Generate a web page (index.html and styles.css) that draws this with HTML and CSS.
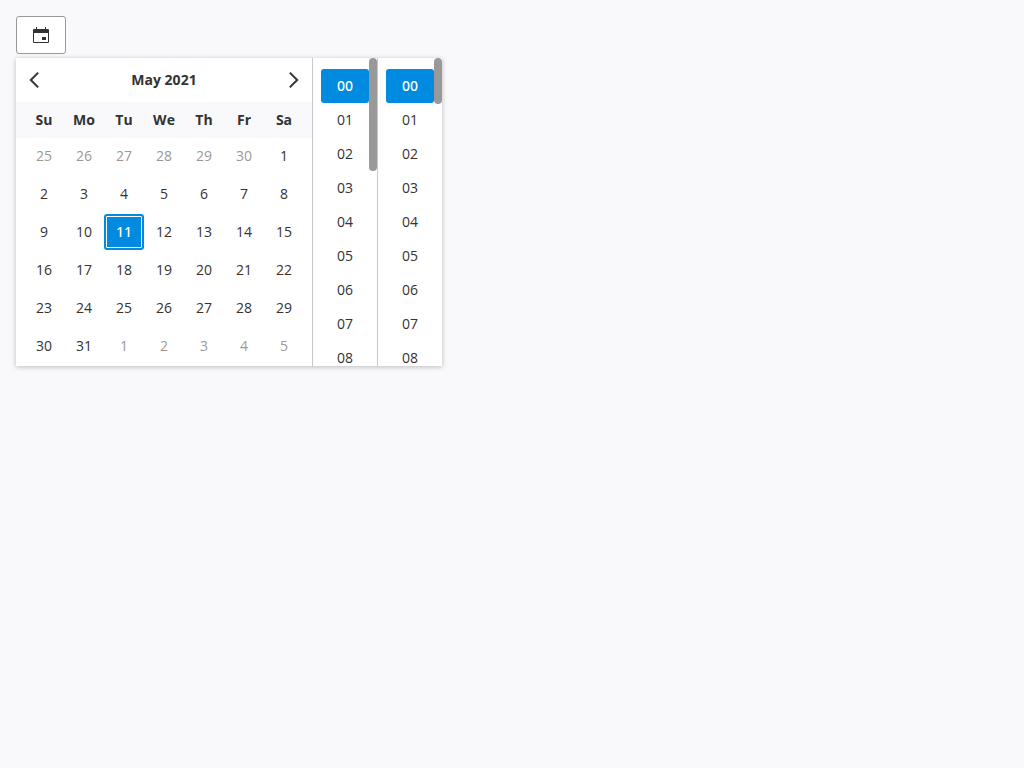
FILE: index.html
```html
<!DOCTYPE html>
<html lang="en">
<head>
<meta charset="utf-8">
<title>Date and time picker</title>
<link rel="stylesheet" href="styles.css">
</head>
<body>
<button class="trigger" aria-label="Open calendar">
<svg width="16" height="16" viewBox="0 0 16 16"><path fill="#333" fill-rule="evenodd" d="M3 0h1v2h8V0h1v2h2a1 1 0 0 1 1 1v12a1 1 0 0 1-1 1H1a1 1 0 0 1-1-1V3a1 1 0 0 1 1-1h2zM1 6v9h14V6zM9 10h4v3H9z"/></svg>
</button>
<div class="panel">
<div class="calendar">
<div class="header">
<svg width="12" height="18" viewBox="0 0 12 18"><path class="chevron" d="M10.2 1.6 2.8 9l7.4 7.4"/></svg>
<span>May 2021</span>
<svg width="12" height="18" viewBox="0 0 12 18"><path class="chevron" d="M1.8 1.6 9.2 9l-7.4 7.4"/></svg>
</div>
<div class="weekdays"><span>Su</span><span>Mo</span><span>Tu</span><span>We</span><span>Th</span><span>Fr</span><span>Sa</span></div>
<div class="days">
<span class="muted">25</span><span class="muted">26</span><span class="muted">27</span><span class="muted">28</span><span class="muted">29</span><span class="muted">30</span><span>1</span>
<span>2</span><span>3</span><span>4</span><span>5</span><span>6</span><span>7</span><span>8</span>
<span>9</span><span>10</span><span class="selected">11</span><span>12</span><span>13</span><span>14</span><span>15</span>
<span>16</span><span>17</span><span>18</span><span>19</span><span>20</span><span>21</span><span>22</span>
<span>23</span><span>24</span><span>25</span><span>26</span><span>27</span><span>28</span><span>29</span>
<span>30</span><span>31</span><span class="muted">1</span><span class="muted">2</span><span class="muted">3</span><span class="muted">4</span><span class="muted">5</span>
</div>
</div>
<div class="time">
<div class="list"><span class="active">00</span><span>01</span><span>02</span><span>03</span><span>04</span><span>05</span><span>06</span><span>07</span><span>08</span></div>
<div class="thumb hours"></div>
</div>
<div class="time">
<div class="list"><span class="active">00</span><span>01</span><span>02</span><span>03</span><span>04</span><span>05</span><span>06</span><span>07</span><span>08</span></div>
<div class="thumb minutes"></div>
</div>
</div>
</body>
</html>
```
FILE: styles.css
```css
* { box-sizing: border-box; }
body {
  margin: 0;
  padding: 16px;
  background: #f9f9fc;
  color: #333;
  font: 14px/20px "Open Sans", sans-serif;
}
.trigger {
  display: flex;
  align-items: center;
  justify-content: center;
  width: 50px;
  height: 38px;
  padding: 0;
  background: #fff;
  border: 1px solid #999;
  border-radius: 3px;
}
.panel {
  display: flex;
  width: 426px;
  height: 308px;
  margin-top: 4px;
  background: #fff;
  box-shadow: 0 1px 5px rgba(0, 0, 0, 0.25);
}
.calendar { width: 296px; }
.header {
  display: flex;
  align-items: center;
  justify-content: space-between;
  height: 44px;
  padding: 0 12px;
  font-weight: 700;
}
.chevron { fill: none; stroke: #333; stroke-width: 2; }
.weekdays, .days {
  display: grid;
  grid-template-columns: repeat(7, 40px);
  padding: 0 8px;
  text-align: center;
}
.weekdays {
  height: 36px;
  background: #f9f9fc;
  font-weight: 700;
  line-height: 36px;
}
.days span {
  height: 36px;
  margin-bottom: 2px;
  line-height: 36px;
}
.days .muted { color: #999; }
.days .selected {
  background: #008ae0;
  border: 2px solid #008ae0;
  border-radius: 3px;
  box-shadow: inset 0 0 0 1px #fff;
  color: #fff;
  font-family: "Noto Sans", sans-serif;
  font-weight: 500;
  line-height: 32px;
}
.time {
  display: flex;
  width: 65px;
  height: 308px;
  padding-left: 8px;
  border-left: 1px solid #c6c9cc;
  overflow: hidden;
}
.list { width: 48px; padding-top: 11px; }
.list span {
  display: block;
  height: 34px;
  line-height: 34px;
  text-align: center;
}
.list .active {
  background: #008ae0;
  border-radius: 3px;
  color: #fff;
  font-family: "Noto Sans", sans-serif;
  font-weight: 500;
}
.thumb { width: 8px; background: #999; border-radius: 4px; }
.hours { height: 113px; }
.minutes { height: 46px; }
```
